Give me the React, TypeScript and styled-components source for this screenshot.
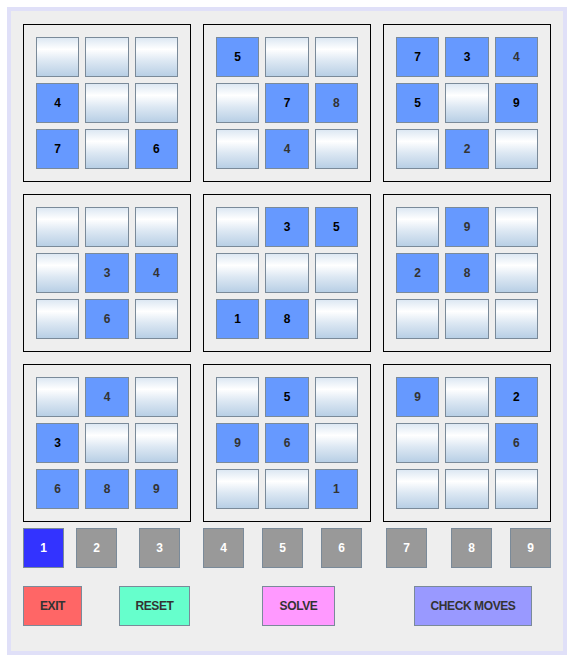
import styled, { createGlobalStyle } from 'styled-components';

const GlobalStyle = createGlobalStyle`
  html, body {
    margin: 0;
    padding: 0;
    background: #ffffff;
  }
  body {
    font-family: 'Liberation Sans', Arial, sans-serif;
  }
`;

interface BlockData {
  values: string;
  given: string;
}

// '.' = empty cell, 'x' in given = number drawn in black
const BLOCKS: BlockData[] = [
  { values: '...4..7.6', given: '...x..x.x' },
  { values: '5...78.4.', given: 'x...x....' },
  { values: '7345.9.2.', given: 'xx.x.x...' },
  { values: '....34.6.', given: '.........' },
  { values: '.35...18.', given: '.xx...xx.' },
  { values: '.9.28....', given: '.........' },
  { values: '.4.3..689', given: '...x.....' },
  { values: '.5.96...1', given: '.x.......' },
  { values: '9.2..6...', given: '..x......' },
];

// left offset of each number key, as laid out in the original window
const KEY_OFFSETS = [0, 12, 22, 23, 18, 18, 24, 24, 18];

const ACTIONS = [
  { label: 'EXIT', color: '#ff6666', width: 59, offset: 0 },
  { label: 'RESET', color: '#66ffcc', width: 71, offset: 37 },
  { label: 'SOLVE', color: '#ff99ff', width: 73, offset: 72 },
  { label: 'CHECK MOVES', color: '#9999ff', width: 118, offset: 79 },
];

const Page = styled.div`
  padding: 7px;
`;

const Frame = styled.div`
  box-sizing: border-box;
  width: 560px;
  height: 648px;
  border: 4px solid #e0e0f8;
  background: #eeeeee;
  padding: 13px 12px 0;
  display: flex;
  flex-direction: column;
`;

const Board = styled.div`
  display: grid;
  grid-template-columns: repeat(3, 168px);
  grid-auto-rows: 158px;
  gap: 12px;
`;

const Block = styled.div`
  border: 1px solid #000000;
  padding: 12px;
  display: grid;
  grid-template-columns: repeat(3, 1fr);
  grid-template-rows: repeat(3, 40px);
  gap: 6px;
`;

const Cell = styled.div<{ $filled: boolean; $given: boolean }>`
  border: 1px solid #7a8a99;
  display: flex;
  align-items: center;
  justify-content: center;
  font-size: 12px;
  font-weight: bold;
  color: ${(p) => (p.$given ? '#000000' : '#333333')};
  background: ${(p) =>
    p.$filled
      ? '#6699ff'
      : 'linear-gradient(to bottom, #dde8f3 0%, #ffffff 30%, #dde8f3 60%, #b8cfe5 100%)'};
`;

const KeyRow = styled.div`
  display: flex;
  margin-top: 6px;
`;

const NumberKey = styled.div<{ $active: boolean; $offset: number }>`
  width: 41px;
  height: 40px;
  margin-left: ${(p) => p.$offset}px;
  box-sizing: border-box;
  border: 1px solid #7a8a99;
  background: ${(p) => (p.$active ? '#3333ff' : '#999999')};
  color: #ffffff;
  font-size: 12px;
  font-weight: bold;
  display: flex;
  align-items: center;
  justify-content: center;
`;

const ActionRow = styled.div`
  display: flex;
  margin-top: 18px;
`;

const ActionButton = styled.div<{ $color: string; $width: number; $offset: number }>`
  width: ${(p) => p.$width}px;
  height: 40px;
  margin-left: ${(p) => p.$offset}px;
  box-sizing: border-box;
  border: 1px solid #7a8a99;
  background: ${(p) => p.$color};
  color: #333333;
  font-size: 12px;
  font-weight: bold;
  letter-spacing: -0.4px;
  display: flex;
  align-items: center;
  justify-content: center;
  white-space: nowrap;
`;

function SudokuBlock({ values, given }: BlockData) {
  return (
    <Block>
      {values.split('').map((ch, i) => (
        <Cell key={i} $filled={ch !== '.'} $given={given[i] === 'x'}>
          {ch !== '.' ? ch : ''}
        </Cell>
      ))}
    </Block>
  );
}

export default function App() {
  return (
    <Page>
      <GlobalStyle />
      <Frame>
        <Board>
          {BLOCKS.map((block, i) => (
            <SudokuBlock key={i} {...block} />
          ))}
        </Board>
        <KeyRow>
          {KEY_OFFSETS.map((offset, i) => (
            <NumberKey key={i} $active={i === 0} $offset={offset}>
              {i + 1}
            </NumberKey>
          ))}
        </KeyRow>
        <ActionRow>
          {ACTIONS.map((a) => (
            <ActionButton key={a.label} $color={a.color} $width={a.width} $offset={a.offset}>
              {a.label}
            </ActionButton>
          ))}
        </ActionRow>
      </Frame>
    </Page>
  );
}
